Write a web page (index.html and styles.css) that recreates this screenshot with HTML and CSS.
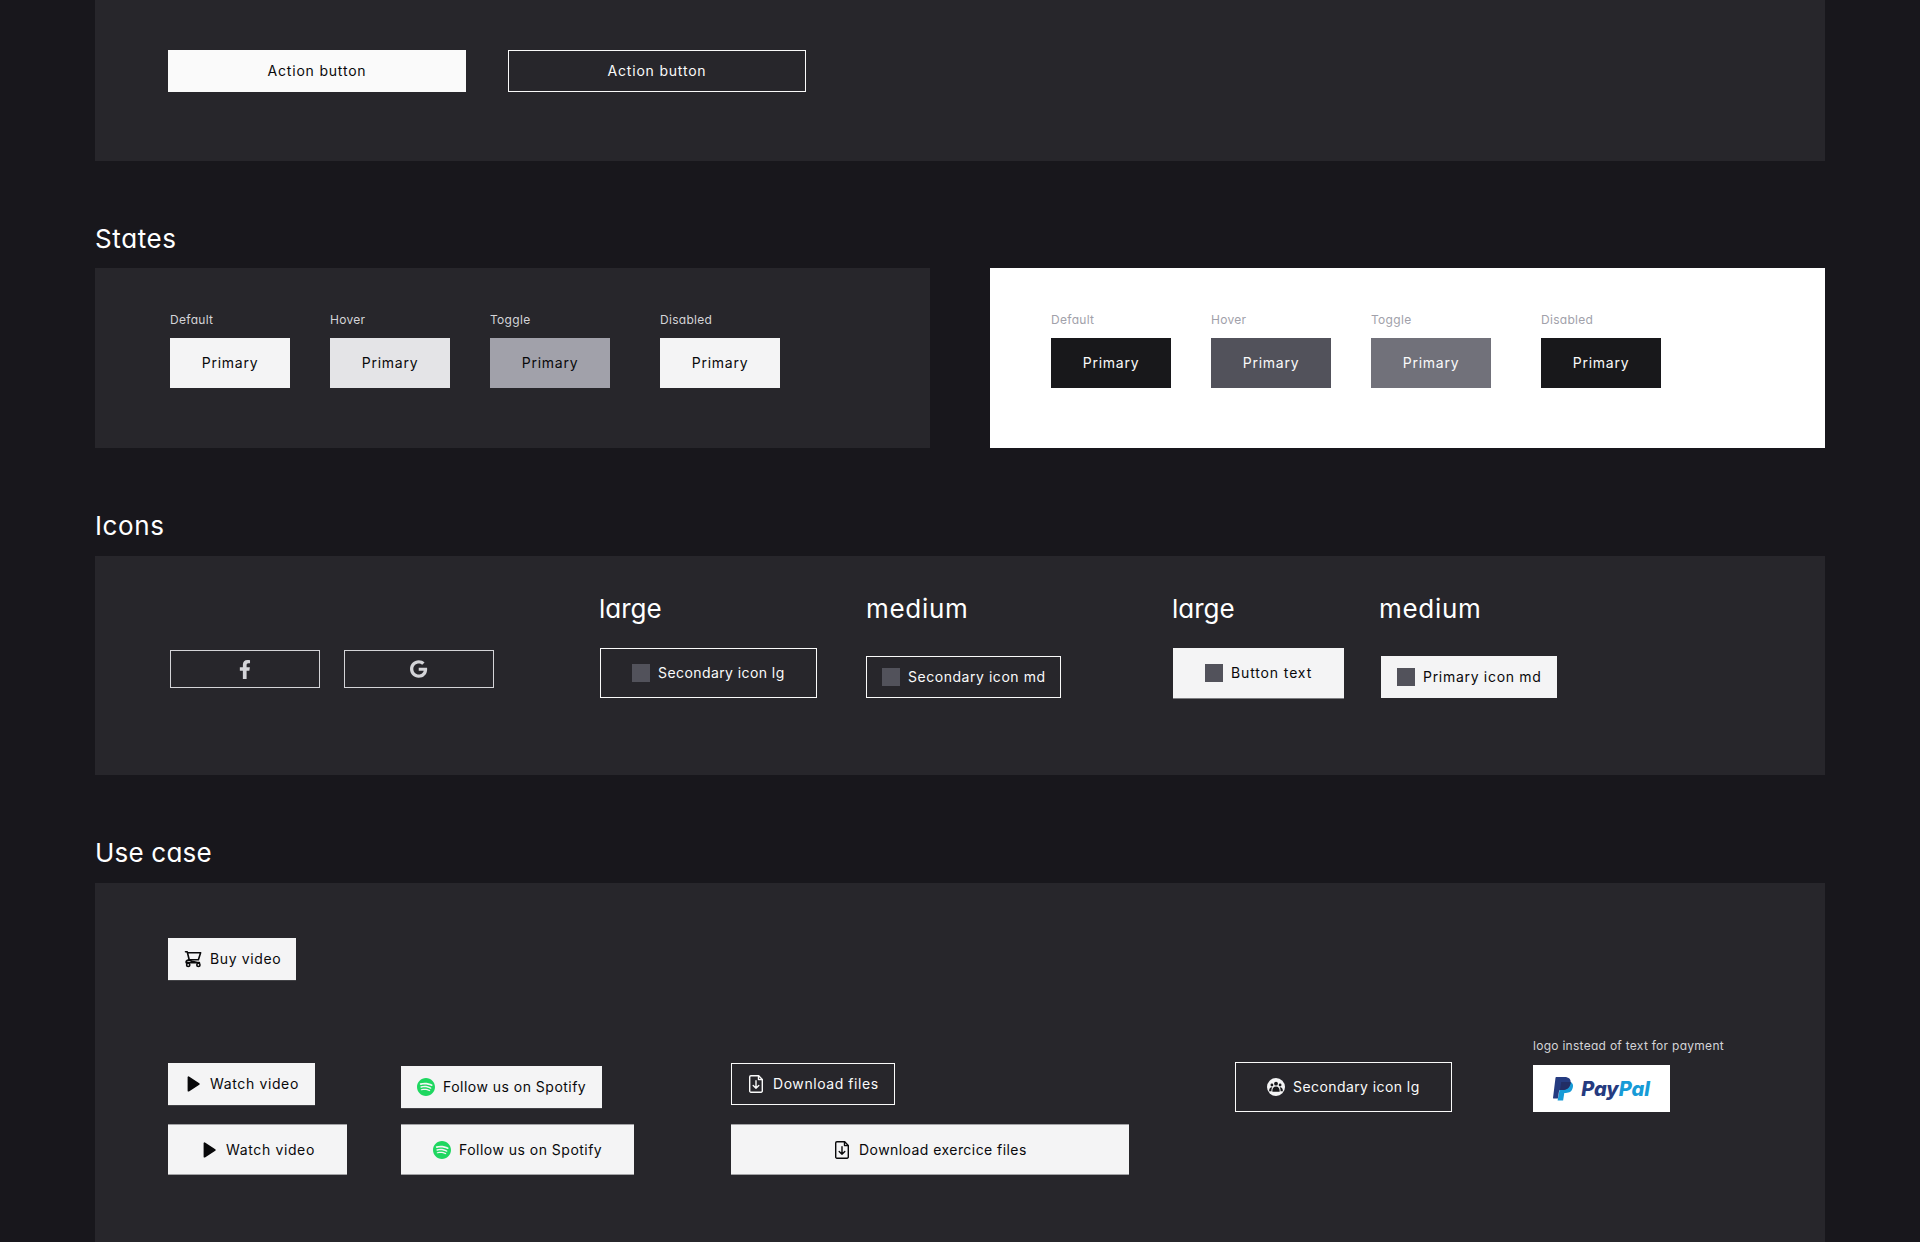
FILE: index.html
```html
<!DOCTYPE html>
<html lang="en">
<head>
  <meta charset="UTF-8" />
  <meta name="viewport" content="width=device-width, initial-scale=1.0" />
  <title>Buttons</title>
  <link rel="stylesheet" href="styles.css">
</head>
<body>
  <!-- Shared icon shapes -->
  <svg class="sprite">
    <symbol id="play" viewBox="0 0 18 18">
      <path d="M4.500 2.300v13.400L14.800 9z" fill="currentColor" stroke="currentColor" stroke-width="1.8" stroke-linejoin="round" />
    </symbol>
    <symbol id="spotify" viewBox="0 8 496 496">
      <circle cx="248" cy="256" r="240" fill="#f4f4f5" />
      <path fill="#1ed760" d="M248 8C111.1 8 0 119.1 0 256s111.1 248 248 248 248-111.1 248-248S384.9 8 248 8zm100.7 364.9c-4.2 0-6.8-1.3-10.7-3.6-62.4-37.6-135-39.2-206.7-24.5-3.9 1-9 2.6-11.9 2.6-9.7 0-15.8-7.7-15.8-15.8 0-10.3 6.1-15.2 13.6-16.8 81.9-18.1 165.6-16.5 237 26.2 6.1 3.9 9.7 7.4 9.7 16.5s-7.1 15.4-15.2 15.4zm26.9-65.6c-5.2 0-8.7-2.3-12.3-4.2-62.5-37-155.7-51.9-238.6-29.4-4.8 1.3-7.4 2.6-11.9 2.6-10.7 0-19.4-8.7-19.4-19.4s5.2-17.8 15.5-20.7c27.8-7.8 56.2-13.6 97.8-13.6 64.9 0 127.6 16.1 177 45.5 8.1 4.8 11.3 11 11.3 19.7-.1 10.8-8.5 19.5-19.4 19.5zm31-76.2c-5.2 0-8.4-1.3-12.9-3.9-71.2-42.5-198.5-52.7-280.9-29.7-3.6 1-8.1 2.6-12.9 2.6-13.2 0-23.3-10.3-23.3-23.6 0-13.6 8.4-21.3 17.4-23.9 35.2-10.3 74.6-15.2 117.5-15.2 73 0 149.5 15.2 205.4 47.8 7.8 4.5 12.9 10.7 12.9 22.6 0 13.6-11 23.3-23.2 23.3z" />
    </symbol>
    <symbol id="download" viewBox="0 0 18 18">
      <g fill="none" stroke="currentColor" stroke-width="1.4" stroke-linecap="round" stroke-linejoin="round">
        <path d="M3.9.8h7.8l3.6 3.6v11.6a1.2 1.2 0 0 1-1.2 1.2H3.9a1.2 1.2 0 0 1-1.2-1.2V2A1.2 1.2 0 0 1 3.9.8z" />
        <path d="M11.5 1v3.6h3.6M9 5.8v7.4M6.2 10.6 9 13.3l2.8-2.7" />
      </g>
    </symbol>
  </svg>

  <main class="page">
    <section class="panel panel-action">
      <button class="btn md action solid">Action button</button>
      <button class="btn md action outline">Action button</button>
    </section>

    <!-- States -->
    <h2 class="title">States</h2>
    <div class="states">
      <section class="panel state-row dark">
        <div class="state"><p class="label">Default</p><button class="btn lg primary">Primary</button></div>
        <div class="state"><p class="label">Hover</p><button class="btn lg primary hover">Primary</button></div>
        <div class="state"><p class="label">Toggle</p><button class="btn lg primary toggle">Primary</button></div>
        <div class="state last"><p class="label">Disabled</p><button class="btn lg primary">Primary</button></div>
      </section>
      <section class="panel state-row light">
        <div class="state"><p class="label">Default</p><button class="btn lg primary">Primary</button></div>
        <div class="state"><p class="label">Hover</p><button class="btn lg primary hover">Primary</button></div>
        <div class="state"><p class="label">Toggle</p><button class="btn lg primary toggle">Primary</button></div>
        <div class="state last"><p class="label">Disabled</p><button class="btn lg primary">Primary</button></div>
      </section>
    </div>

    <!-- Icons -->
    <h2 class="title tall">Icons</h2>
    <section class="panel icons">
      <div class="social">
        <button class="btn social-btn" aria-label="Facebook">
          <svg class="fb" viewBox="0 0 320 512"><path d="M279.14 288l14.22-92.66h-88.91v-60.13c0-25.35 12.42-50.06 52.24-50.06h40.42V6.26S260.43 0 225.36 0c-73.22 0-121.08 44.38-121.08 124.72v70.62H22.89V288h81.39v224h100.17V288z" fill="currentColor" /></svg>
        </button>
        <button class="btn social-btn" aria-label="Google">
          <svg class="google" viewBox="0 0 488 512"><path d="M488 261.8C488 403.3 391.1 504 248 504 110.8 504 0 393.2 0 256S110.8 8 248 8c66.8 0 123 24.5 166.3 64.9l-67.5 64.9C258.5 52.6 94.3 116.6 94.3 256c0 86.5 69.1 156.6 153.7 156.6 98.2 0 135-70.4 140.8-106.9H248v-85.3h236.1c2.3 12.7 3.9 24.9 3.9 41.4z" fill="currentColor" /></svg>
        </button>
      </div>
      <div class="size size-1">
        <h3 class="size-title">large</h3>
        <button class="btn lg outline with-icon secondary-lg"><span class="square"></span>Secondary icon lg</button>
      </div>
      <div class="size size-2">
        <h3 class="size-title wide">medium</h3>
        <button class="btn md outline with-icon secondary-md"><span class="square"></span>Secondary icon md</button>
      </div>
      <div class="size size-3">
        <h3 class="size-title">large</h3>
        <button class="btn lg with-icon button-text"><span class="square"></span>Button text</button>
      </div>
      <div class="size size-4">
        <h3 class="size-title wide">medium</h3>
        <button class="btn md with-icon primary-md"><span class="square"></span>Primary icon md</button>
      </div>
    </section>

    <!-- Use case -->
    <h2 class="title tall use-title">Use case</h2>
    <section class="panel use-case">
      <button class="btn md with-icon buy">
        <svg class="icon" viewBox="0 0 18 18">
          <g fill="none" stroke="currentColor" stroke-width="1.6" stroke-linecap="round" stroke-linejoin="round">
            <path d="M1.5 1.7h1.7l2 8h9.2l2.2-6.9H3.6" />
            <path d="M5.2 9.900c-2.8.4-3.8 1.800-2.800 3.200M5.200 9.900l3.200 1.600M3 12.600h12.400M8 11.400l5.400 1.200" />
            <circle cx="4.200" cy="14.900" r="1.600" />
            <circle cx="14.400" cy="14.900" r="1.600" />
          </g>
        </svg>
        Buy video
      </button>

      <div class="cases">
        <div class="case case-video">
          <button class="btn md with-icon watch"><svg class="icon"><use href="#play" /></svg>Watch video</button>
          <button class="btn lg with-icon watch-lg edge"><svg class="icon"><use href="#play" /></svg>Watch video</button>
        </div>
        <div class="case case-spotify">
          <button class="btn md with-icon spotify"><svg class="icon"><use href="#spotify" /></svg>Follow us on Spotify</button>
          <button class="btn lg with-icon spotify-lg edge"><svg class="icon"><use href="#spotify" /></svg>Follow us on Spotify</button>
        </div>
        <div class="case case-download">
          <button class="btn md outline with-icon download"><svg class="icon"><use href="#download" /></svg>Download files</button>
          <button class="btn lg with-icon download-lg edge"><svg class="icon"><use href="#download" /></svg>Download exercice files</button>
        </div>
        <div class="case case-group">
          <button class="btn lg outline with-icon secondary-lg">
            <svg class="icon" viewBox="0 0 18 18">
              <circle cx="9" cy="9" r="9" fill="#f4f4f5" />
              <g fill="#18181b">
                <circle cx="9" cy="5.7" r="1.9" />
                <circle cx="4.9" cy="7" r="1.4" />
                <circle cx="13.1" cy="7" r="1.4" />
                <path d="M5.4 13.8c-.3-3.4 1-5.4 3.6-5.4s3.900 2 3.600 5.400zM4.500 13.300H2.200c-.2-2.500.8-4.200 3.100-4-.8 1.200-1 2.500-.8 4zM13.500 13.300h2.300c.2-2.500-.8-4.200-3.100-4 .8 1.200 1 2.500.8 4z" />
              </g>
            </svg>
            Secondary icon lg
          </button>
        </div>
        <div class="case case-payment">
          <p class="label">logo instead of text for payment</p>
          <button class="btn paypal">
            <svg class="paypal-mark" viewBox="0 0 20 24">
              <path fill="#179bd7" d="M8 5h9.500c2.300 1 2.900 3 2.300 5.600-.8 3.800-3.300 5.400-7 5.400h-1.500l-1.200 7.600H4.600z" />
              <path fill="#253b80" d="M3.200 0h8.300c4.300 0 6.700 2.200 6.100 6-.7 4.600-3.700 7-8.300 7H7.100c-.6 0-.9.300-1 .8L4.900 21.500H.4c-.3 0-.4-.2-.4-.5L2.500.7c.1-.4.3-.7.7-.7z" />
              <path fill="#222d65" d="M8.300 5h8.500c.3 0 .6.1.8.2v.8c-.7 4.600-3.700 7-8.300 7H7.100l1-7.400c0-.3.100-.6.200-.6z" />
            </svg>
            <span class="paypal-name">Pay<span class="pal">Pal</span></span>
          </button>
        </div>
      </div>
    </section>
  </main>
</body>
</html>
```
FILE: styles.css
```css
* {
  margin: 0;
  padding: 0;
  box-sizing: border-box;
}
body {
  height: 1242px;
  overflow: hidden;
  background-color: #18171c;
  color: white;
  font-family: Inter, "Open Sans", sans-serif;
}
.sprite {
  display: none;
}
.page {
  width: 1730px;
  margin: 0 95px;
}
.panel {
  background-color: #27262b;
}

/* Headings */
.title,
.size-title {
  height: 40px;
  font-size: 26px;
  font-weight: 400;
  line-height: 40px;
  font-feature-settings: "cv11";
}
.title {
  margin: 58px 0 9px;
  letter-spacing: 0.6px;
}
.title.tall {
  margin-bottom: 10px;
}
.title.use-title {
  letter-spacing: 0.2px;
}
.size-title {
  margin-left: -1px;
  letter-spacing: 0;
}
.size-title.wide {
  letter-spacing: 0.7px;
}
.label {
  margin-bottom: 6px;
  font-size: 12px;
  line-height: 24px;
  letter-spacing: 0.3px;
  white-space: nowrap;
  color: #d4d4d8;
  font-feature-settings: "cv11";
}

/* Buttons */
.btn {
  display: flex;
  align-items: center;
  justify-content: center;
  gap: 8px;
  border: none;
  background-color: #f4f4f5;
  color: #09090b;
  font: 400 14px/18px Inter, "Open Sans", sans-serif;
  letter-spacing: 0.63px;
  white-space: nowrap;
  cursor: pointer;
}
.md {
  height: 42px;
}
.lg {
  height: 50px;
}
.outline {
  border: 1px solid #fafafa;
  background: none;
  color: #fafafa;
}
.with-icon {
  justify-content: flex-start;
}
.with-icon.md {
  padding-left: 16px;
}
.with-icon.lg {
  padding-left: 32px;
}
.outline.with-icon.md {
  padding-left: 15px;
}
.outline.with-icon.lg {
  padding-left: 31px;
}
.icon,
.square {
  flex: none;
  width: 18px;
  height: 18px;
}
.square {
  background-color: #52525b;
}

/* Action buttons */
.panel-action {
  display: flex;
  gap: 42px;
  height: 161px;
  padding: 50px 0 0 73px;
}
.action {
  width: 298px;
  letter-spacing: 0.8px;
}
.solid {
  background-color: #fafafa;
}

/* States */
.states {
  display: flex;
  gap: 60px;
}
.state-row {
  display: flex;
  gap: 40px;
  width: 835px;
  height: 180px;
  padding-top: 40px;
}
.dark {
  padding-left: 75px;
}
.light {
  padding-left: 61px;
  background-color: white;
}
.state.last {
  margin-left: 10px;
}
.primary {
  width: 120px;
  letter-spacing: 0.75px;
}
.primary.hover {
  background-color: #e4e4e7;
}
.primary.toggle {
  background-color: #a1a1aa;
}
.light .label {
  color: #a1a1aa;
}
.light .primary {
  background-color: #18181b;
  color: #fafafa;
}
.light .primary.hover {
  background-color: #52525b;
}
.light .primary.toggle {
  background-color: #71717a;
}

/* Icons */
.icons {
  display: flex;
  height: 219px;
  padding: 33px 0 0 75px;
}
.social {
  display: flex;
  gap: 24px;
  padding-top: 61px;
}
.social-btn {
  width: 150px;
  height: 38px;
  border: 1px solid #d4d4d8;
  background: none;
  color: #d4d4d8;
}
.fb {
  height: 19px;
}
.google {
  height: 18px;
}
.size {
  display: flex;
  flex-direction: column;
  justify-content: space-between;
  height: 109px;
}
.size-1 {
  margin-left: 106px;
}
.size-2 {
  margin-left: 49px;
}
.size-2 .size-title {
  margin-left: 0;
}
.size-3 {
  margin-left: 112px;
}
.size-4 {
  margin-left: 37px;
}
.size-4 .size-title {
  margin-left: -2px;
}
.secondary-lg {
  width: 217px;
  letter-spacing: 0.42px;
}
.secondary-md {
  width: 195px;
  letter-spacing: 0.54px;
}
.button-text {
  width: 171px;
  letter-spacing: 0.87px;
  box-shadow: 0 1px 0 #7c7c80;
}
.primary-md {
  width: 176px;
  letter-spacing: 0.7px;
}

/* Use case */
.use-case {
  height: 400px;
  padding: 55px 0 0 73px;
}
.buy {
  width: 128px;
  box-shadow: 0 1px 0 #424246;
}
.cases {
  display: flex;
  margin-top: 55px;
}
.case {
  display: flex;
  flex-direction: column;
}
.case-video {
  width: 179px;
  padding-top: 28px;
  gap: 19px;
}
.case-spotify {
  width: 233px;
  margin-left: 54px;
  padding-top: 31px;
  gap: 16px;
}
.case-download {
  width: 398px;
  margin-left: 97px;
  padding-top: 28px;
  gap: 19px;
}
.case-group {
  margin-left: 106px;
  padding-top: 27px;
}
.case-payment {
  margin-left: 81px;
}
.case-payment .label {
  margin: -1px 0 7px;
  letter-spacing: 0.28px;
}
.edge {
  height: 51px;
  border: solid #a2a2a5;
  border-width: 1px 0;
}
.watch,
.spotify {
  box-shadow: 0 1px 0 #424246;
}
.watch {
  width: 147px;
}
.watch-lg {
  width: 179px;
}
.spotify {
  width: 201px;
}
.spotify-lg {
  width: 233px;
}
.spotify,
.spotify-lg {
  letter-spacing: 0.48px;
}
.download {
  width: 164px;
  letter-spacing: 0.56px;
}
.download-lg {
  letter-spacing: 0.44px;
}
.with-icon.download-lg {
  padding-left: 102px;
}

/* PayPal */
.paypal {
  width: 137px;
  height: 47px;
  background-color: white;
}
.paypal-mark {
  width: 20px;
  height: 24px;
}
.paypal-name {
  color: #253b80;
  font-size: 20px;
  font-style: italic;
  font-weight: 800;
  line-height: 24px;
  letter-spacing: -0.05px;
  font-feature-settings: "cv11";
}
.pal {
  color: #179bd7;
}
```
